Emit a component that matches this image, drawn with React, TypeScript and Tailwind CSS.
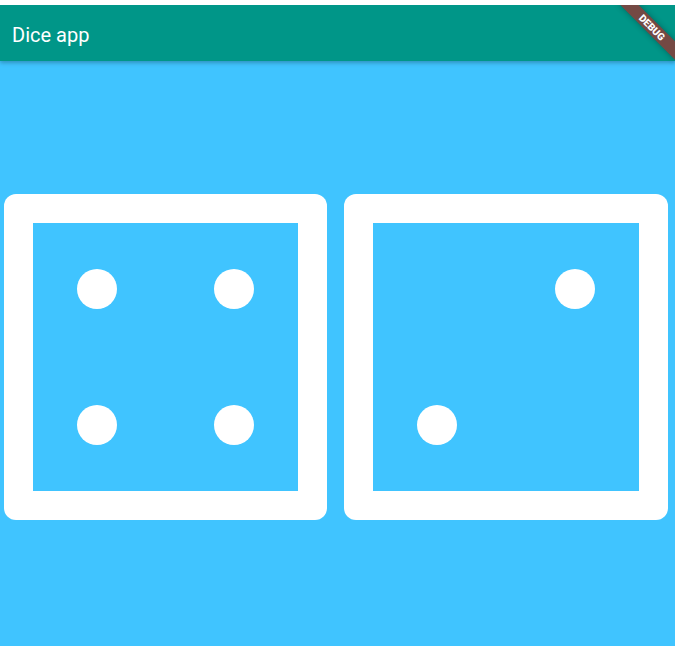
import React from "react";

// dot positions on a 3x3 grid (col, row), 1-based
type Dot = [number, number];

const Die = ({ dots, width }: { dots: Dot[]; width: string }) => {
  return (
    <div className={`${width} h-[326px] shrink-0 rounded-[12px] bg-white p-[29px]`}>
      <div className="grid h-full w-full grid-cols-[40px_1fr_40px] grid-rows-[40px_1fr_40px] bg-[#40c4ff] px-[44px] py-[46px]">
        {dots.map(([c, r], i) => (
          <div
            key={i}
            className={`h-[40px] w-[40px] rounded-full bg-white ${
              c === 1 ? "col-start-1" : c === 2 ? "col-start-2" : "col-start-3"
            } ${r === 1 ? "row-start-1" : r === 2 ? "row-start-2" : "row-start-3"}`}
          />
        ))}
      </div>
    </div>
  );
};

export default function App() {
  return (
    <div className="flex h-[646px] w-[675px] flex-col overflow-hidden bg-white font-['Roboto',sans-serif]">
      {/* status strip */}
      <div className="h-[5px] shrink-0 bg-white" />

      <div className="relative flex flex-1 flex-col overflow-hidden">
        {/* app bar */}
        <header className="relative z-10 flex h-[56px] shrink-0 items-center bg-[#009688] pl-[12px] pt-[3px] shadow-[0_2px_4px_rgba(0,0,0,0.25)]">
          <h1 className="text-[20px] font-normal leading-none text-white">Dice app</h1>
        </header>

        {/* body */}
        <main className="flex flex-1 items-start gap-[17px] bg-[#40c4ff] pl-[4px] pt-[133px]">
          <Die
            width="w-[323px]"
            dots={[
              [1, 1],
              [3, 1],
              [1, 3],
              [3, 3],
            ]}
          />
          <Die
            width="w-[324px]"
            dots={[
              [3, 1],
              [1, 3],
            ]}
          />
        </main>

        {/* debug banner */}
        <div className="absolute right-[-17px] top-[16px] z-20 flex h-[13px] w-[80px] rotate-45 items-center justify-center bg-[rgba(183,28,28,0.63)] shadow-[0_0_6px_rgba(0,0,0,0.3)]">
          <span className="text-[10px] font-black leading-none text-white">DEBUG</span>
        </div>
      </div>
    </div>
  );
}
